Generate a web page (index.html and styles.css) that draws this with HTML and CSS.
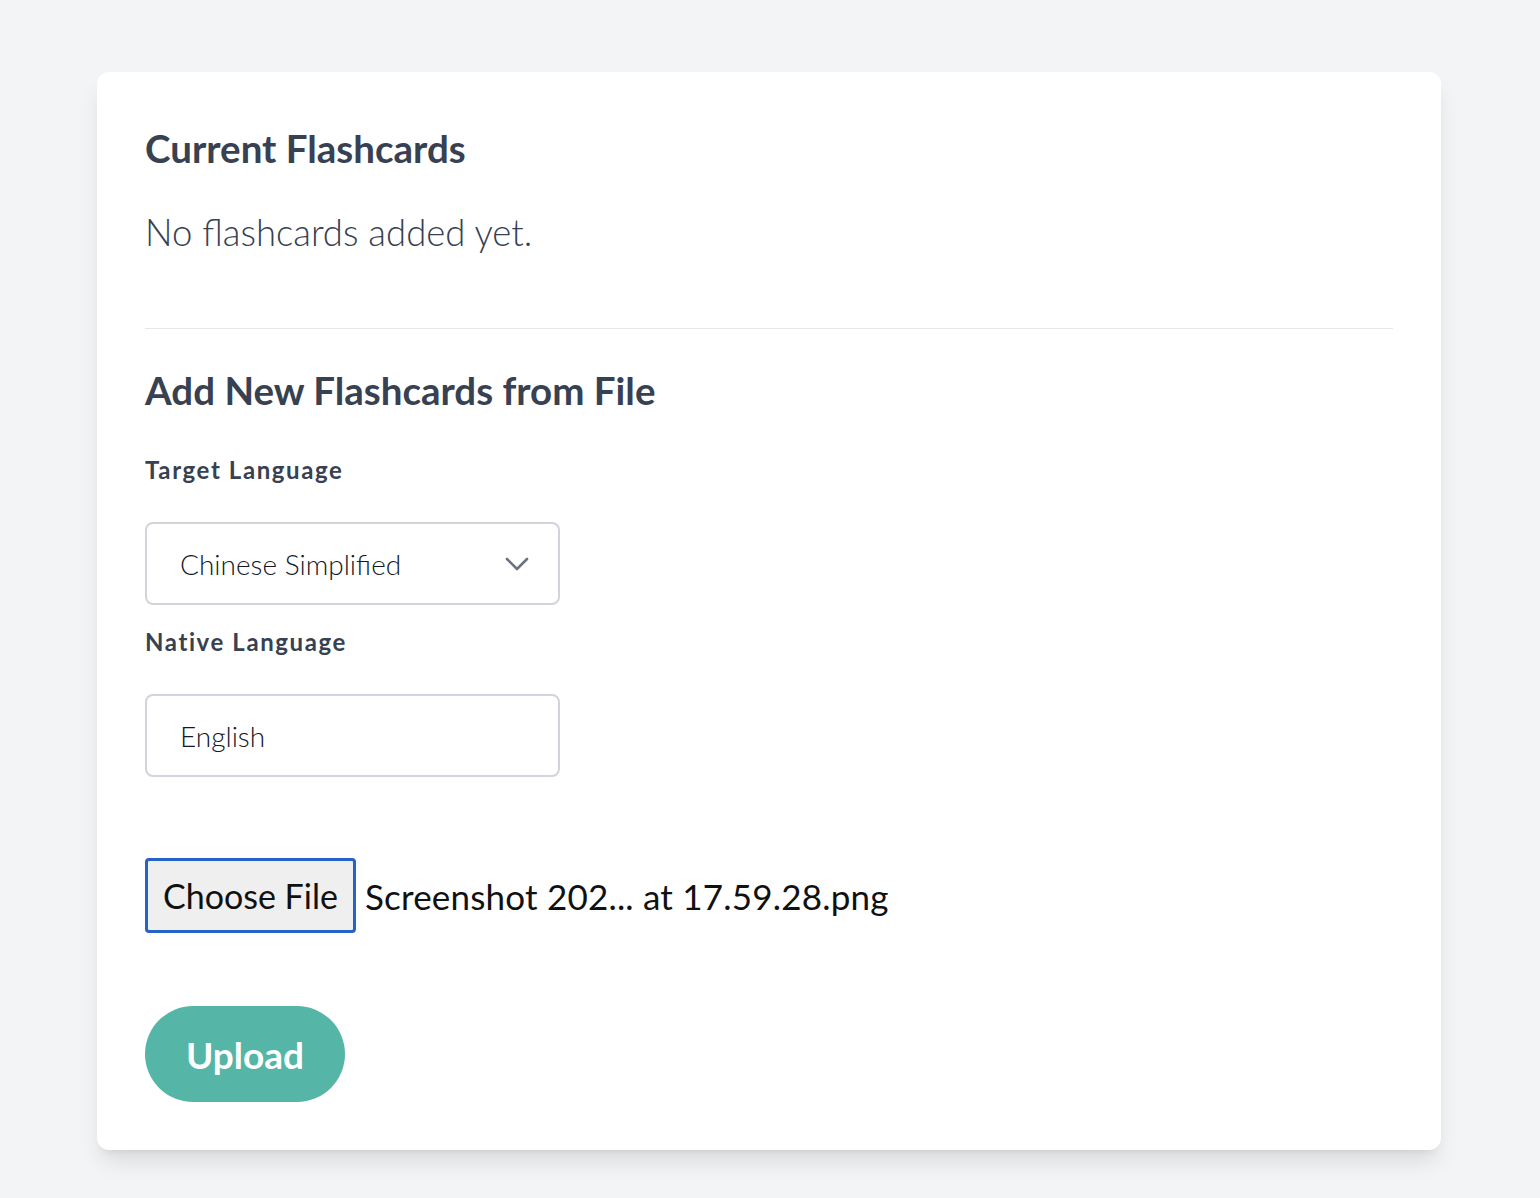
FILE: index.html
```html
<!DOCTYPE html>
<html lang="en">
<head>
<meta charset="utf-8">
<title>Flashcards</title>
<link rel="stylesheet" href="styles.css">
</head>
<body>
<main class="card">
  <h2 class="title">Current Flashcards</h2>
  <p class="empty">No flashcards added yet.</p>
  <hr class="divider">
  <h2 class="title title-add">Add New Flashcards from File</h2>
  <label class="label label-target">Target Language</label>
  <div class="field select-field">
    <span class="field-value">Chinese Simplified</span>
    <svg class="chevron" width="26" height="16" viewBox="0 0 26 16" aria-hidden="true"><path d="M3 3 L13 13 L23 3" fill="none" stroke="#6b7280" stroke-width="2.6" stroke-linecap="round" stroke-linejoin="round"/></svg>
  </div>
  <label class="label label-native">Native Language</label>
  <div class="field input-field">
    <span class="field-value">English</span>
  </div>
  <div class="file-row">
    <span class="file-btn">Choose File</span>
    <span class="file-name">Screenshot 202... at 17.59.28.png</span>
  </div>
  <button class="upload">Upload</button>
</main>
</body>
</html>
```
FILE: styles.css
```css
html, body {
  margin: 0;
  padding: 0;
}
body {
  background: #f3f4f6;
  font-family: Lato, "Noto Sans", "Liberation Sans", sans-serif;
  color: #374151;
  padding: 72px 0 48px 97px;
}
.card {
  width: 1344px;
  box-sizing: border-box;
  background: #ffffff;
  border-radius: 12px;
  padding: 48px 48px 48px 48px;
  box-shadow: 0 15px 22px -4px rgba(0,0,0,0.10), 0 6px 9px -6px rgba(0,0,0,0.10);
  display: flex;
  flex-direction: column;
  align-items: flex-start;
}
.title {
  margin: 0;
  font-size: 38.5px;
  line-height: 56px;
  font-weight: 700;
  color: #374151;
}
.empty {
  margin: 28px 0 0;
  font-size: 36.5px;
  line-height: 56px;
  font-weight: 300;
  color: #374151;
}
.divider {
  align-self: stretch;
  border: 0;
  border-top: 1px solid #e5e7eb;
  margin: 68px 0 0;
  height: 0;
}
.title-add {
  margin-top: 33px;
}
.label {
  display: block;
  font-size: 24px;
  line-height: 32px;
  font-weight: 700;
  letter-spacing: 1.6px;
  color: #374151;
}
.label-target { margin-top: 36px; }
.label-native { margin-top: 21px; }
.field {
  margin-top: 36px;
  width: 415px;
  height: 83px;
  box-sizing: border-box;
  border: 2px solid #d1d5db;
  border-radius: 8px;
  display: flex;
  align-items: center;
  justify-content: space-between;
  padding: 0 28px 0 33px;
}
.field-value {
  font-size: 28px;
  font-weight: 300;
  color: #111827;
}
.chevron {
  display: block;
}
.file-row {
  margin-top: 81px;
  display: flex;
  align-items: center;
  gap: 9px;
  height: 75px;
}
.file-btn {
  height: 75px;
  box-sizing: border-box;
  border: 3px solid #2563c9;
  border-radius: 4px;
  background: #efefef;
  display: flex;
  align-items: center;
  padding: 0 15px;
  font-size: 34px;
  font-weight: 400;
  color: #111111;
}
.file-name {
  font-size: 35px;
  font-weight: 400;
  letter-spacing: 0.2px;
  color: #111111;
}
.upload {
  margin-top: 73px;
  width: 200px;
  height: 96px;
  border: 0;
  border-radius: 48px;
  background: #55b5a6;
  color: #ffffff;
  font-family: inherit;
  font-size: 37px;
  font-weight: 700;
  padding: 0;
  cursor: pointer;
}
```
